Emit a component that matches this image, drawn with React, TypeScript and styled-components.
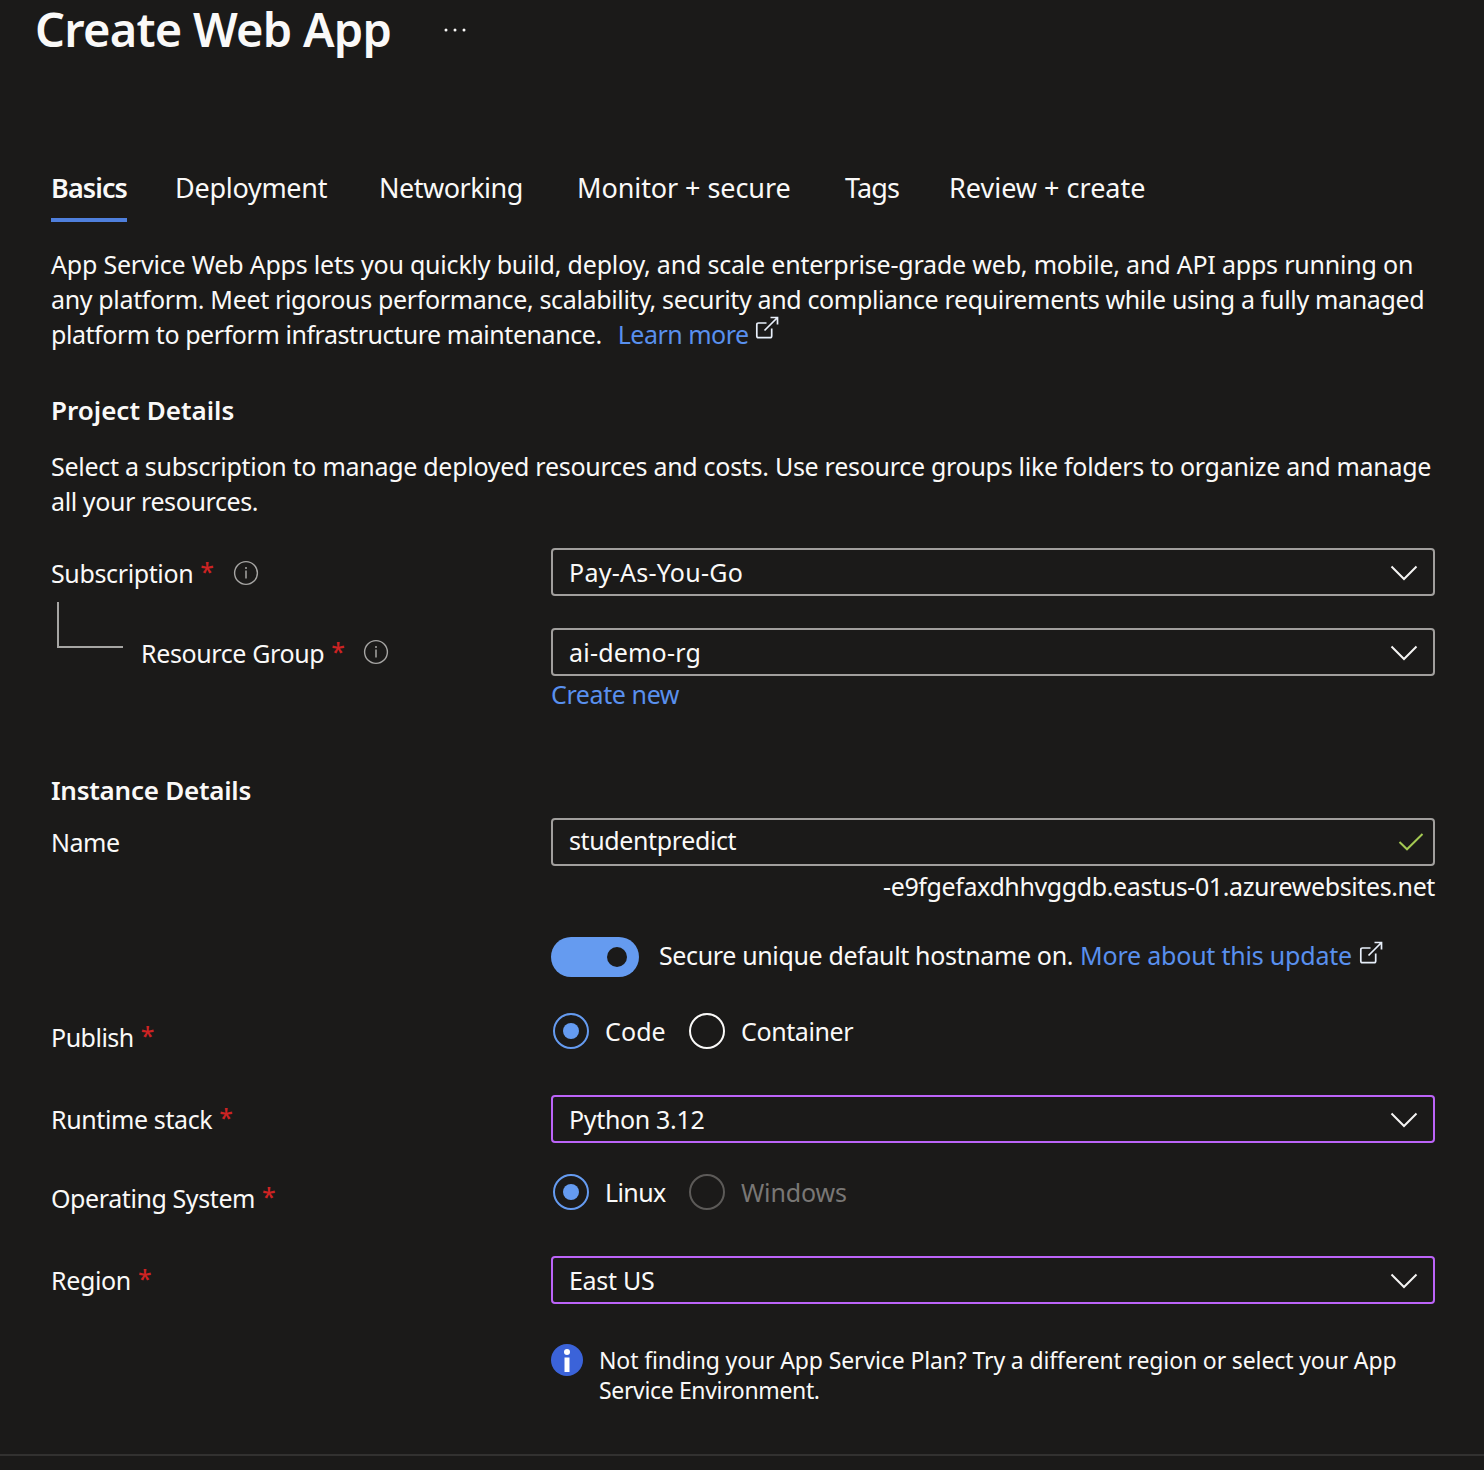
import React from "react";
import styled, { createGlobalStyle } from "styled-components";

const GlobalStyle = createGlobalStyle`
  * { box-sizing: border-box; }
  body {
    margin: 0;
    background: #1b1a19;
    color: #faf9f8;
    font-family: "Noto Sans", "Open Sans", sans-serif;
    font-size: 25px;
    line-height: 35px;
  }
  h1, h2, p { margin: 0; }
`;

const Page = styled.main`
  width: 1484px;
  height: 1470px;
  display: flex;
  flex-direction: column;
`;

/* Tracking wraps a run of text and tunes its letter spacing */
const Tracking = styled.span<{ $ls?: number }>`
  letter-spacing: ${(p) => p.$ls ?? 0}px;
  white-space: pre;
`;

const TitleBar = styled.header`
  display: flex;
  align-items: center;
  gap: 49px;
  height: 58px;
  padding-left: 35px;
`;

const Title = styled.h1`
  font-size: 47px;
  font-weight: 600;
  line-height: 58px;
  width: 360px;
`;

const MoreIcon = styled.svg`
  display: block;
  fill: #faf9f8;
  margin-top: 2px;
`;

const Tabs = styled.nav`
  display: grid;
  grid-template-columns: 124px 204px 198px 268px 104px auto;
  justify-content: start;
  margin: 111px 0 0 51px;
  height: 53px;
`;

const Tab = styled.a<{ $active?: boolean }>`
  justify-self: start;
  width: ${(p) => (p.$active ? "76px" : "auto")};
  height: 53px;
  font-size: 27px;
  line-height: 38px;
  font-weight: ${(p) => (p.$active ? 600 : 400)};
  border-bottom: 4px solid ${(p) => (p.$active ? "#4f7fdc" : "transparent")};
`;

const Content = styled.div`
  display: flex;
  flex-direction: column;
  padding: 25px 49px 0 51px;
  height: 1232px;
`;

const Paragraph = styled.p`
  display: flex;
  flex-direction: column;
`;

const LineWithLink = styled.span`
  display: flex;
`;

const Link = styled.a<{ $indent?: number }>`
  color: #5990ee;
  margin-left: ${(p) => p.$indent ?? 0}px;
`;

const ExternalSvg = styled.svg<{ $drop: number; $gap: number }>`
  display: block;
  flex: none;
  margin: ${(p) => p.$drop}px 0 0 ${(p) => p.$gap}px;
  fill: none;
  stroke: #e8effa;
  stroke-width: 1.7;
`;

const Heading = styled.h2<{ $top: number }>`
  font-size: 26px;
  font-weight: 600;
  line-height: 35px;
  margin: ${(p) => p.$top}px 0 0;
`;

const Intro = styled(Paragraph)`
  margin-top: 21px;
`;

const Field = styled.div<{ $top: number; $height?: number }>`
  display: grid;
  grid-template-columns: 500px 884px;
  margin-top: ${(p) => p.$top}px;
  height: ${(p) => p.$height ?? 48}px;
`;

const Label = styled.div<{ $drop: number }>`
  display: flex;
  align-items: flex-start;
  padding-top: ${(p) => p.$drop}px;
`;

const Branch = styled.span`
  width: 66px;
  height: 46px;
  margin: -34px 18px 0 6px;
  border: solid #a6a5a3;
  border-width: 0 0 2px 2px;
`;

const Star = styled.span`
  color: #cd2323;
  margin: -2px 0 0 7px;
  font-size: 25px;
  font-weight: 500;
  width: 14px;
`;

const InfoSvg = styled.svg<{ $gap: number; $drop: number }>`
  display: block;
  margin: ${(p) => p.$drop}px 0 0 ${(p) => p.$gap}px;
  fill: none;
  stroke: #a6a5a3;
`;

const Box = styled.div<{ $accent?: boolean; $lift?: number }>`
  display: flex;
  justify-content: space-between;
  align-items: center;
  height: 48px;
  padding: 0 15px 0 16px;
  border: 2px solid ${(p) => (p.$accent ? "#bc64f8" : "#a19f9d")};
  border-radius: 4px;
  & > span { margin-top: ${(p) => -(p.$lift ?? 0)}px; }
`;

const ChevronSvg = styled.svg`
  display: block;
  margin-top: 2px;
  fill: none;
  stroke: #f5f4f3;
  stroke-width: 2;
`;

const CheckSvg = styled.svg`
  display: block;
  margin-right: -6px;
  fill: none;
  stroke: #a4c952;
  stroke-width: 2;
`;

const Below = styled.div`
  height: 35px;
  margin: 1px 0 0 500px;
`;

const Host = styled(Below)`
  margin-top: 3px;
  text-align: right;
`;

const ToggleRow = styled.div`
  display: flex;
  align-items: center;
  height: 40px;
  margin: 33px 0 0 500px;
`;

const ToggleText = styled.span`
  display: flex;
  margin-top: -3px;
`;

const Toggle = styled.span`
  display: flex;
  justify-content: flex-end;
  align-items: center;
  width: 88px;
  height: 40px;
  padding-right: 12px;
  margin-right: 20px;
  border-radius: 20px;
  background: #659bf0;
`;

const Knob = styled.span`
  width: 20px;
  height: 20px;
  border-radius: 50%;
  background: #1b1a19;
`;

const Radios = styled.div`
  display: grid;
  grid-template-columns: 136px auto;
  justify-content: start;
  padding-left: 2px;
`;

const Radio = styled.div<{ $disabled?: boolean }>`
  display: flex;
  align-items: center;
  gap: 16px;
  height: 36px;
  line-height: 36px;
  color: ${(p) => (p.$disabled ? "#797775" : "inherit")};
`;

const Ring = styled.span<{ $on?: boolean; $disabled?: boolean }>`
  display: grid;
  place-items: center;
  flex: none;
  width: 36px;
  height: 36px;
  border-radius: 50%;
  border: 2px solid ${(p) => (p.$on ? "#659bf0" : p.$disabled ? "#5c5a58" : "#faf9f8")};
  &::after {
    content: "";
    width: 16px;
    height: 16px;
    border-radius: 50%;
    background: ${(p) => (p.$on ? "#659bf0" : "transparent")};
  }
`;

const Note = styled.div`
  display: flex;
  gap: 16px;
  margin: 40px 0 0 500px;
  font-size: 23px;
  line-height: 30px;
`;

const NoteSvg = styled.svg`
  display: block;
  flex: none;
`;

const NoteText = styled(Paragraph)`
  padding-top: 1px;
`;

const Footer = styled.footer`
  height: 16px;
  border-top: 2px solid #323130;
`;

const External = ({ drop, gap }: { drop: number; gap: number }) => (
  <ExternalSvg $drop={drop} $gap={gap} width="24" height="24" viewBox="0 0 24 24">
    <path d="M11.5 7H3.5Q1.8 7 1.8 8.700V20Q1.800 21.700 3.500 21.700H15Q16.700 21.700 16.700 20V12.500" />
    <path d="M9.500 14.500L22 2M15.500 1.500H22.500V8.500" />
  </ExternalSvg>
);

const Info = ({ gap, drop }: { gap: number; drop: number }) => (
  <InfoSvg $gap={gap} $drop={drop} width="26" height="26" viewBox="0 0 26 26">
    <circle cx="13" cy="13" r="11.4" strokeWidth="1.4" />
    <path d="M13 10.500V18.500M13 7V9" strokeWidth="1.5" />
  </InfoSvg>
);

const Select = ({ text, ls, accent }: { text: string; ls?: number; accent?: boolean }) => (
  <Box $accent={accent}>
    <Tracking $ls={ls}>{text}</Tracking>
    <ChevronSvg width="28" height="16" viewBox="0 0 28 16">
      <path d="M1.500 1.500L14 14L26.500 1.500" />
    </ChevronSvg>
  </Box>
);

const RadioOption = ({ text, ls, on, disabled }: { text: string; ls?: number; on?: boolean; disabled?: boolean }) => (
  <Radio $disabled={disabled}>
    <Ring $on={on} $disabled={disabled} />
    <Tracking $ls={ls}>{text}</Tracking>
  </Radio>
);

const tabs = [
  { text: "Basics", ls: -0.9 },
  { text: "Deployment", ls: -0.28 },
  { text: "Networking", ls: -0.5 },
  { text: "Monitor + secure", ls: -0.08 },
  { text: "Tags", ls: -0.9 },
  { text: "Review + create", ls: 0 },
];

export default function App() {
  return (
    <>
      <GlobalStyle />
      <Page>
        <TitleBar>
          <Title><Tracking $ls={-0.75}>Create Web App</Tracking></Title>
          <MoreIcon width="24" height="6" viewBox="0 0 24 6">
            <circle cx="2" cy="3" r="1.500" />
            <circle cx="11" cy="3" r="1.500" />
            <circle cx="20" cy="3" r="1.500" />
          </MoreIcon>
        </TitleBar>
        <Tabs>
          {tabs.map((t, i) => (
            <Tab key={t.text} $active={i === 0}><Tracking $ls={t.ls}>{t.text}</Tracking></Tab>
          ))}
        </Tabs>
        <Content>
          <Paragraph>
            <Tracking $ls={-0.2}>App Service Web Apps lets you quickly build, deploy, and scale enterprise-grade web, mobile, and API apps running on</Tracking>
            <Tracking $ls={-0.35}>any platform. Meet rigorous performance, scalability, security and compliance requirements while using a fully managed</Tracking>
            <LineWithLink>
              <Tracking $ls={-0.44}>platform to perform infrastructure maintenance.</Tracking>
              <Link $indent={16}><Tracking $ls={-0.5}>Learn more</Tracking></Link>
              <External drop={-1} gap={6} />
            </LineWithLink>
          </Paragraph>

          <Heading $top={41}>Project Details</Heading>
          <Intro>
            <Tracking $ls={-0.285}>Select a subscription to manage deployed resources and costs. Use resource groups like folders to organize and manage</Tracking>
            <Tracking $ls={-0.4}>all your resources.</Tracking>
          </Intro>

          <Field $top={29}>
            <Label $drop={8}>
              <Tracking $ls={-0.37}>Subscription</Tracking>
              <Star>*</Star>
              <Info gap={19} drop={4} />
            </Label>
            <Select text="Pay-As-You-Go" ls={0.25} />
          </Field>
          <Field $top={32}>
            <Label $drop={8}>
              <Branch />
              <Tracking $ls={-0.38}>Resource Group</Tracking>
              <Star>*</Star>
              <Info gap={18} drop={3} />
            </Label>
            <Select text="ai-demo-rg" ls={0.2} />
          </Field>
          <Below><Link><Tracking $ls={-0.4}>Create new</Tracking></Link></Below>

          <Heading $top={61}><Tracking $ls={-0.25}>Instance Details</Tracking></Heading>
          <Field $top={10}>
            <Label $drop={7}><Tracking $ls={-0.5}>Name</Tracking></Label>
            <Box $lift={3}>
              <Tracking $ls={-0.38}>studentpredict</Tracking>
              <CheckSvg width="26" height="20" viewBox="0 0 26 20">
                <path d="M1.500 10L9 17.300L24.500 2" />
              </CheckSvg>
            </Box>
          </Field>
          <Host><Tracking $ls={-0.39}>-e9fgefaxdhhvggdb.eastus-01.azurewebsites.net</Tracking></Host>
          <ToggleRow>
            <Toggle><Knob /></Toggle>
            <ToggleText>
              <Tracking $ls={-0.36}>Secure unique default hostname on.</Tracking>
              <Link $indent={7}><Tracking $ls={-0.21}>More about this update</Tracking></Link>
              <External drop={3} gap={7} />
            </ToggleText>
          </ToggleRow>

          <Field $top={36} $height={36}>
            <Label $drop={7}><Tracking $ls={-0.5}>Publish</Tracking><Star>*</Star></Label>
            <Radios>
              <RadioOption text="Code" ls={0.1} on />
              <RadioOption text="Container" ls={-0.4} />
            </Radios>
          </Field>
          <Field $top={46}>
            <Label $drop={7}><Tracking $ls={-0.38}>Runtime stack</Tracking><Star>*</Star></Label>
            <Select text="Python 3.12" ls={-0.33} accent />
          </Field>
          <Field $top={31} $height={36}>
            <Label $drop={7}><Tracking $ls={-0.41}>Operating System</Tracking><Star>*</Star></Label>
            <Radios>
              <RadioOption text="Linux" ls={-0.6} on />
              <RadioOption text="Windows" ls={-0.15} disabled />
            </Radios>
          </Field>
          <Field $top={46}>
            <Label $drop={7}><Tracking $ls={-0.35}>Region</Tracking><Star>*</Star></Label>
            <Select text="East US" ls={-0.3} accent />
          </Field>

          <Note>
            <NoteSvg width="32" height="32" viewBox="0 0 32 32">
              <circle cx="16" cy="16" r="16" fill="#3b63d9" />
              <circle cx="16" cy="8" r="3" fill="#fff" />
              <rect x="13.500" y="13.500" width="5" height="14.500" fill="#fff" />
            </NoteSvg>
            <NoteText>
              <Tracking $ls={-0.13}>Not finding your App Service Plan? Try a different region or select your App</Tracking>
              <Tracking $ls={-0.35}>Service Environment.</Tracking>
            </NoteText>
          </Note>
        </Content>
        <Footer />
      </Page>
    </>
  );
}
